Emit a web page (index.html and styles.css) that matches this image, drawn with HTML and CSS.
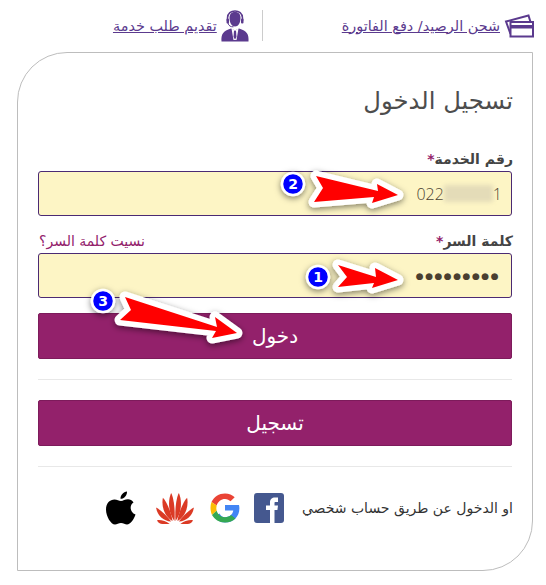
FILE: index.html
```html
<!DOCTYPE html>
<html lang="ar" dir="rtl">
<head>
  <meta charset="UTF-8">
  <meta name="viewport" content="width=device-width, initial-scale=1.0">
  <title>تسجيل الدخول</title>
  <link rel="stylesheet" href="styles.css">
</head>
<body>
<nav class="top-links">
  <a class="top-link top-link-pay" href="#">
    <svg class="icon-card" viewBox="0 0 30 24" width="30" height="24">
      <path d="M6.500 20 L2 7.500 L24.500 1.500 L26.500 8" fill="none" stroke="#5b3a8e" stroke-width="2"/>
      <rect x="6.500" y="8" width="22.500" height="14.500" fill="#fff" stroke="#5b3a8e" stroke-width="2"/>
      <rect x="6.500" y="11" width="22.500" height="3.500" fill="#5b3a8e"/>
    </svg>
    <span>شحن الرصيد/ دفع الفاتورة</span>
  </a>
  <span class="top-divider"></span>
  <a class="top-link top-link-service" href="#">
    <svg class="icon-agent" viewBox="0 0 28 32" width="28" height="32">
      <path d="M8.500 8 C8.500 3.500 11 2 14 2 C17 2 19.500 3.500 19.500 8 C19.500 13 17 16.500 14 16.500 C11 16.500 8.500 13 8.500 8 Z" fill="#5b3a8e"/>
      <path d="M6.500 11 V8 C6.500 -1.500 21.500 -1.500 21.500 8 V11" fill="none" stroke="#5b3a8e" stroke-width="1.500"/>
      <rect x="5.500" y="8.500" width="2.500" height="5" rx="1" fill="#5b3a8e"/>
      <rect x="20" y="8.500" width="2.500" height="5" rx="1" fill="#5b3a8e"/>
      <path d="M7 13 C7.500 16 10 17 12.500 16.800" fill="none" stroke="#5b3a8e" stroke-width="1"/>
      <path d="M.5 31.500 C0 24 2 21 10 18.500 L14 20.500 L18 18.500 C26 21 28 24 27.500 31.500 Z" fill="#5b3a8e"/>
      <path d="M10.500 18.500 L14 20.500 L17.500 18.500 L15.500 30 H12.500 Z" fill="#fff"/>
      <path d="M13 20.800 H15 L15.500 27 L14 29.500 L12.500 27 Z" fill="#5b3a8e"/>
    </svg>
    <span>تقديم طلب خدمة</span>
  </a>
</nav>

<main class="card">
  <h1 class="card-title">تسجيل الدخول</h1>

  <div class="field">
    <div class="field-head">
      <label class="field-label">رقم الخدمة<span class="req">*</span></label>
    </div>
    <div class="fake-input" dir="ltr">
      <span>022</span><span class="blurred"></span><span>1</span>
    </div>
  </div>

  <div class="field field-pass">
    <div class="field-head">
      <label class="field-label">كلمة السر<span class="req">*</span></label>
      <a class="forgot" href="#">نسيت كلمة السر؟</a>
    </div>
    <div class="fake-input fake-input-pass" dir="ltr">●●●●●●●●●</div>
  </div>

  <button class="btn btn-login">دخول</button>
  <hr class="sep">
  <button class="btn">تسجيل</button>
  <hr class="sep">

  <div class="social">
    <span class="social-text">او الدخول عن طريق حساب شخصي</span>
    <svg class="social-icon" viewBox="0 0 30 30" width="30" height="30">
      <rect width="30" height="30" rx="3" fill="#45588f"/>
      <path d="M16 30 V17 H12 V12.500 H16 V9.500 C16 6 18 4.500 21 4.500 H24 V9 H21.500 C20.500 9 20.500 9.500 20.500 10.500 V12.500 H24 L23.400 17 H20.500 V30 Z" fill="#fff"/>
    </svg>
    <svg class="social-icon" viewBox="0 0 30 30" width="30" height="30">
      <path d="M15 12 H29 C29.300 13.200 29.400 14.200 29.400 15.300 C29.400 23.500 23.800 29.500 15 29.500 C10.500 29.500 7 27.500 4.500 24 L9.500 20.500 C10.700 22.800 12.500 24.200 15 24.200 C19 24.200 22.500 22 23.300 17.500 H15 Z" fill="#4285f4"/>
      <path d="M1.500 9 C4 3.800 9 .5 15 .5 C19 .5 22.300 2 24.700 4.300 L20.500 8.300 C19.200 7 17.300 6 15 6 C11.200 6 8 8.500 6.700 12.500 Z" fill="#ea4335"/>
      <path d="M1.500 9 L6.700 12.500 C6.200 14.500 6.200 16 6.700 17.800 L2 22 C.2 18 0 13 1.500 9 Z" fill="#fbbc05"/>
      <path d="M2 22 L6.700 17.800 C8 21.800 11 24.200 15 24.200 C17.500 24.200 19.700 23.400 21 22 L25.500 25.500 C22.800 28.200 19.300 29.500 15 29.500 C9.200 29.500 4.500 26.500 2 22 Z" fill="#34a853"/>
    </svg>
    <svg class="social-icon social-huawei" viewBox="-20 -30 40 32" width="40" height="31">
      <g fill="#db3a25">
        <path d="M-.6 -1 C-7 -10 -7.500 -22 -4 -30 C-1.500 -26 .5 -12 -.6 -1 Z"/>
        <path d="M.6 -1 C7 -10 7.500 -22 4 -30 C1.500 -26 -.5 -12 .6 -1 Z"/>
        <path d="M-2.500 -1 C-10 -5 -14.500 -15 -12.500 -25 C-8.500 -21 -3.500 -9 -2.500 -1 Z"/>
        <path d="M2.500 -1 C10 -5 14.500 -15 12.500 -25 C8.500 -21 3.500 -9 2.500 -1 Z"/>
        <path d="M-4 -.5 C-12 -1 -18.500 -7 -19.500 -15 C-14.500 -12.500 -7 -5 -4 -.5 Z"/>
        <path d="M4 -.5 C12 -1 18.500 -7 19.500 -15 C14.500 -12.500 7 -5 4 -.5 Z"/>
        <path d="M-5.500 2 H-13 C-15.500 2 -17.500 .5 -18.500 -2 C-14.500 -2.500 -9 -1 -5.500 2 Z"/>
        <path d="M5.500 2 H13 C15.500 2 17.500 .5 18.500 -2 C14.500 -2.500 9 -1 5.500 2 Z"/>
      </g>
    </svg>
    <svg class="social-icon social-apple" viewBox="0 0 30 34" width="30" height="36">
      <path d="M21 .5 C21.200 4.500 18 8 14.500 7.800 C14.200 4 17.500 1 21 .5 Z" fill="#000"/>
      <path d="M27.500 11.500 C23 14.500 24 21.500 29.500 23.500 C28 28 24.500 33.500 21 33.500 C19 33.500 17.500 32 15 32 C12.500 32 11 33.500 9 33.500 C5 33.500 0 25.500 0 18.500 C0 12 4 8.500 8.500 8.500 C11 8.500 13 10 15 10 C17 10 19 8.300 22 8.300 C24 8.300 26.200 9.500 27.500 11.500 Z" fill="#000"/>
    </svg>
  </div>
</main>

<svg class="notes" viewBox="0 0 546 585" width="546" height="585">
  <defs>
    <filter id="shade" x="-30%" y="-50%" width="160%" height="220%">
      <feDropShadow dx="0" dy="2" stdDeviation="3" flood-color="#000" flood-opacity=".5"/>
    </filter>
  </defs>
  <g class="arrow" filter="url(#shade)">
    <polygon points="316,176 378,191 377,184 398,195 372,203 374,197 314,202 323,188"/>
    <polygon points="338,265 376,277 375,268 398,280 372,288 374,283 338,287 347,277"/>
    <polygon points="125,297 217,327 215,317 237,333 212,338 216,331 120,320 131,310"/>
  </g>
  <g class="badge" filter="url(#shade)">
    <circle cx="293" cy="184" r="11"/>
    <circle cx="318" cy="277" r="11"/>
    <circle cx="103" cy="301" r="11"/>
  </g>
  <g class="badge-num">
    <text x="293" y="189">2</text>
    <text x="318" y="282">1</text>
    <text x="103" y="306">3</text>
  </g>
</svg>
</body>
</html>
```

FILE: styles.css
```css
:root {
  --link-color: #5b3a8e;
  --brand-color: #93216b;
  --input-background: #fdf5c5;
  --input-border: #4b2a73;
  --text-color: #444;
  --border-color: #bdbdbd;
}

html, body {
  height: 100%;
}

body {
  font-family: "DejaVu Sans", sans-serif;
  margin: 0;
  background-color: #fff;
  color: var(--text-color);
  position: relative;
  overflow: hidden;
}

.top-links {
  display: flex;
  align-items: center;
  height: 52px;
  padding-bottom: 1px;
  box-sizing: border-box;
  padding-right: 12px;
}

.top-link {
  display: flex;
  align-items: center;
  gap: 4px;
  color: var(--link-color);
  font-size: 14.400px;
}

.top-divider {
  width: 1px;
  height: 31px;
  margin: 0 79px 0 13px;
  background-color: #ccc;
}

.top-link span {
  white-space: nowrap;
}

.card {
  margin: 0 13px 0 17px;
  height: 519px;
  box-sizing: border-box;
  padding: 0 20px;
  border: 1px solid var(--border-color);
  border-top-left-radius: 50px;
  border-bottom-right-radius: 50px;
  background-color: #fff;
}

.card-title {
  font-size: 24.300px;
  font-weight: 400;
  margin: 30px -1px 0 0;
  line-height: 36px;
  color: #4d4d4d;
}

.field {
  margin-top: 30px;
}

.field-pass {
  margin-top: 15px;
}

.field-head {
  display: flex;
  justify-content: space-between;
  align-items: center;
  height: 20px;
  padding-bottom: 2px;
  margin-right: -1px;
}

.field-label {
  font-size: 14px;
  font-weight: 700;
}

.req {
  color: var(--brand-color);
}

.forgot {
  color: var(--brand-color);
  font-size: 14px;
  text-decoration: none;
  margin-left: 1px;
}

.fake-input {
  display: flex;
  justify-content: flex-end;
  align-items: center;
  height: 45px;
  box-sizing: border-box;
  padding: 0 9px;
  background-color: var(--input-background);
  border: 1px solid var(--input-border);
  border-radius: 3px;
  font-family: "Open Sans", sans-serif;
  font-weight: 300;
  font-size: 16px;
  color: #4a3f30;
}

.fake-input-pass {
  padding: 0 11px;
  font-family: "DejaVu Sans", sans-serif;
  font-weight: 400;
  font-size: 9px;
  letter-spacing: 1.500px;
}

.blurred {
  width: 49px;
  height: 17px;
  background-color: #e4dcb8;
  filter: blur(2px);
}

.btn {
  display: block;
  width: 100%;
  height: 46px;
  margin: 0;
  border: 1px solid #7d1b5b;
  border-radius: 2px;
  background-color: var(--brand-color);
  color: #fff;
  font-family: inherit;
  font-size: 20px;
}

.btn-login {
  margin-top: 15px;
}

.sep {
  border: 0;
  border-top: 1px solid #e8e8e8;
  margin: 20px 0;
}

.social {
  display: flex;
  align-items: center;
  gap: 14px;
  margin-top: 23px;
}

.social-text {
  font-size: 14px;
  color: #333;
  margin: 0 -1px 0 4px;
  white-space: nowrap;
}

.social-huawei {
  margin-right: 1px;
}

.social-apple {
  margin-right: 5px;
}

.notes {
  position: absolute;
  top: 0;
  left: 0;
  pointer-events: none;
}

.arrow polygon {
  fill: #f00;
  stroke: #fff;
  stroke-width: 11;
  stroke-linejoin: round;
  paint-order: stroke;
}

.badge circle {
  fill: #00f;
  stroke: #fff;
  stroke-width: 2.500;
}

.badge-num text {
  fill: #fff;
  font-family: "DejaVu Sans", sans-serif;
  font-size: 14px;
  font-weight: 700;
  text-anchor: middle;
}
```
